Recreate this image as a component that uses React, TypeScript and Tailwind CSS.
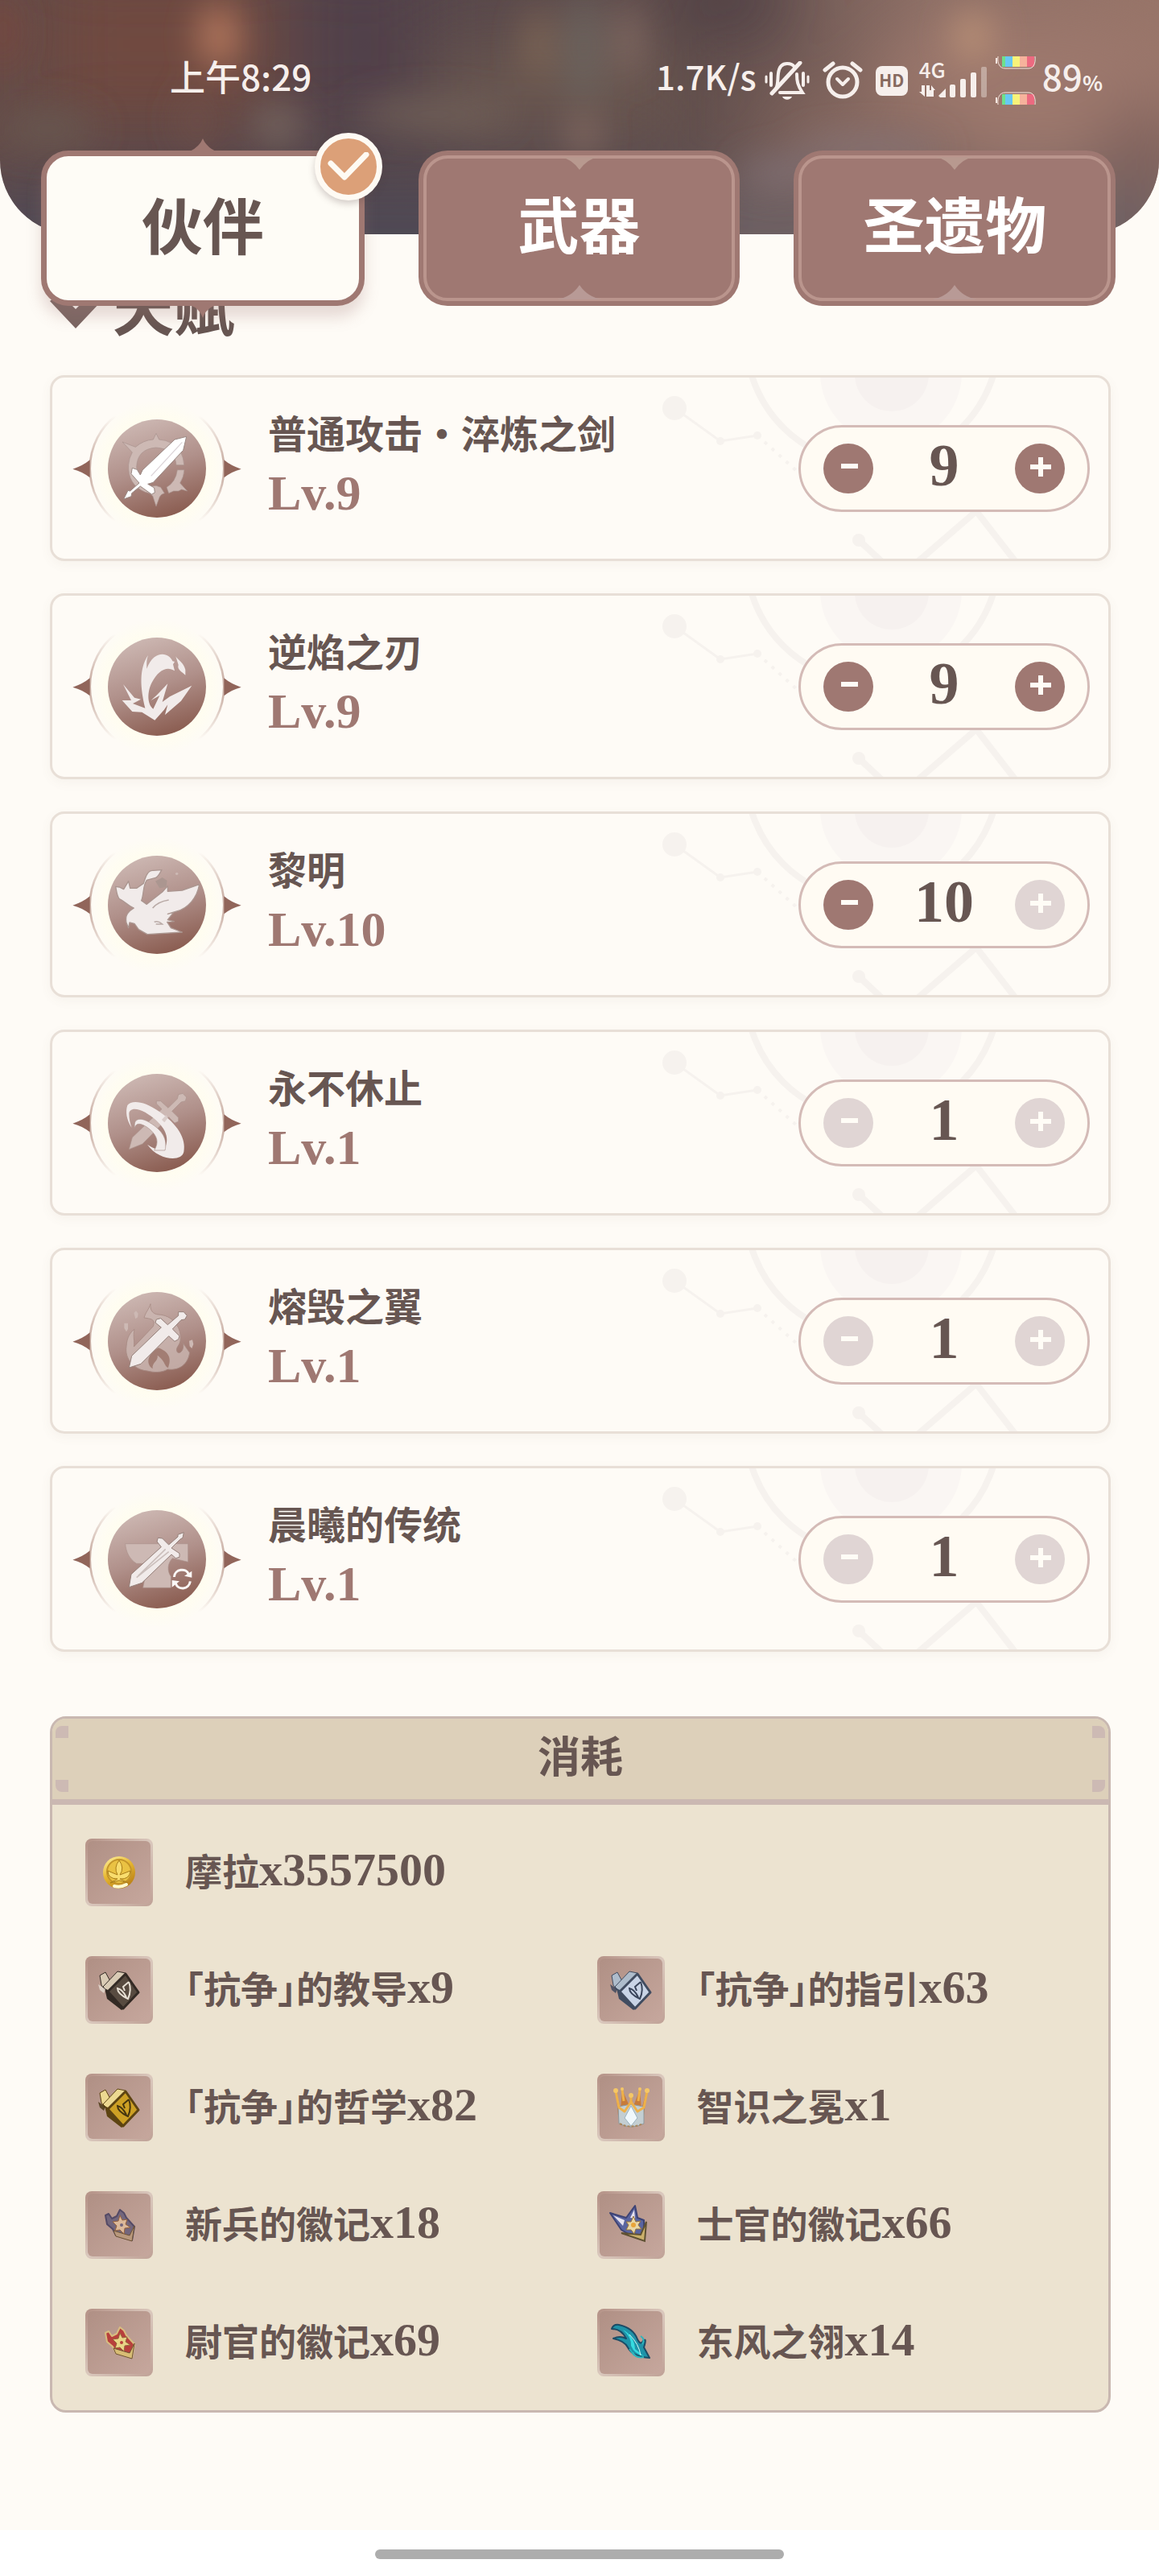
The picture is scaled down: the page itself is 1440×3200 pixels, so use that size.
import { useState, type ReactNode } from "react";

const CJK = "font-['Noto_Sans_CJK_SC','Noto_Sans',sans-serif]";
const NUM = "font-['Liberation_Serif','Noto_Sans_CJK_SC',serif]";

/* ---------- status bar ---------- */

function Backdrop() {
  return (
    <svg
      className="absolute inset-0 h-full w-full"
      viewBox="0 0 1440 291"
      preserveAspectRatio="none"
      aria-hidden="true"
    >
      <defs>
        <filter id="haze" x="-60%" y="-80%" width="220%" height="260%">
          <feGaussianBlur stdDeviation="22" />
        </filter>
        <filter id="hazeWide" x="-30%" y="-60%" width="160%" height="220%">
          <feGaussianBlur stdDeviation="42" />
        </filter>
        <linearGradient id="base" x1="0" x2="1" y1="0" y2="0">
          <stop offset="0" stopColor="#644b47" />
          <stop offset="0.3" stopColor="#54454a" />
          <stop offset="0.6" stopColor="#614e4c" />
          <stop offset="0.8" stopColor="#8c6e65" />
          <stop offset="1" stopColor="#977468" />
        </linearGradient>
      </defs>
      <rect width="1440" height="291" fill="url(#base)" />
      <g filter="url(#hazeWide)">
        <rect x="60" y="-40" width="280" height="190" fill="#70493f" />
        <rect x="380" y="-40" width="140" height="190" fill="#51414a" />
        <rect x="540" y="60" width="300" height="100" fill="#69564f" />
        <rect x="-40" y="225" width="900" height="140" fill="#4f4a54" />
        <rect x="860" y="225" width="620" height="140" fill="#6d6063" />
        <ellipse cx="900" cy="0" rx="80" ry="50" fill="#4f3f45" />
        <ellipse cx="1280" cy="110" rx="190" ry="90" fill="#9d786d" />
        <ellipse cx="1080" cy="170" rx="120" ry="40" fill="#86685f" />
        <ellipse cx="1420" cy="190" rx="60" ry="60" fill="#7d605c" />
      </g>
      <g filter="url(#haze)">
        <ellipse cx="272" cy="45" rx="24" ry="40" fill="#b87a5f" />
        <ellipse cx="4" cy="40" rx="16" ry="50" fill="#7a463c" />
        <ellipse cx="60" cy="160" rx="60" ry="24" fill="#68574f" />
        <ellipse cx="345" cy="155" rx="32" ry="24" fill="#766660" />
        <ellipse cx="245" cy="150" rx="20" ry="36" fill="#6e4f48" />
        <ellipse cx="540" cy="142" rx="100" ry="18" fill="#716159" />
        <ellipse cx="668" cy="55" rx="12" ry="46" fill="#8a7059" />
        <ellipse cx="725" cy="60" rx="20" ry="70" fill="#6d6660" />
        <ellipse cx="782" cy="50" rx="12" ry="46" fill="#8d736b" />
        <ellipse cx="725" cy="168" rx="18" ry="20" fill="#92746b" />
        <ellipse cx="1208" cy="45" rx="24" ry="30" fill="#bb9277" />
        <ellipse cx="1080" cy="185" rx="90" ry="12" fill="#87777c" />
        <ellipse cx="970" cy="215" rx="50" ry="16" fill="#807074" />
      </g>
    </svg>
  );
}

function MutedBell() {
  return (
    <svg className="h-12 w-14" viewBox="0 0 56 48" fill="none" stroke="#f6efec" strokeLinecap="round">
      <path d="M14 34 C17 29 16 22 17 15 C18 7 22 3 28 3 C32 3 35 4 37 7" strokeWidth="4" />
      <path d="M40 16 C40 25 41 30 47 39 L19 39" strokeWidth="4" />
      <path d="M44 2 L9 40" strokeWidth="5" />
      <path d="M22 44 H34 C32 49 24 49 22 44 Z" fill="#f6efec" stroke="none" />
      <path d="M8 15 V30 M48 15 V30" strokeWidth="4" />
      <path d="M2 19 V26 M54 19 V26" strokeWidth="3" />
    </svg>
  );
}

function Alarm() {
  return (
    <svg className="h-12 w-[50px]" viewBox="0 0 50 48" fill="none" stroke="#f6efec" strokeLinecap="round">
      <circle cx="25" cy="26" r="18" strokeWidth="5" />
      <path d="M18 22 L25 29 L32 22" strokeWidth="4" strokeLinejoin="round" />
      <path d="M3 11 L13 3 M47 11 L37 3" strokeWidth="5" />
    </svg>
  );
}

function Signal() {
  return (
    <div className={`relative flex h-[42px] w-[86px] items-end ${CJK}`}>
      <span className="absolute top-0 left-0 text-[26px] leading-[14px] font-medium">4G</span>
      <svg className="h-10 w-full" viewBox="0 0 86 40" fill="#f6efec">
        <path d="M3 25 H7 V39 L0 33 H3 Z M9 25 H13 L13 31 L15 31 V39 H9 Z M15 25 L20 31 H18 V39 H15 Z" />
        <path d="M24 38 L33 29 V40 H26 Z" />
        <rect x="38" y="24" width="7" height="16" rx="2" />
        <rect x="51" y="17" width="7" height="23" rx="2" />
        <rect x="64" y="9" width="7" height="31" rx="2" />
        <rect x="77" y="2" width="7" height="38" rx="2" opacity="0.4" />
      </svg>
    </div>
  );
}

function BatteryStripe({ flip }: { flip?: boolean }) {
  const colours = ["#6fe08a", "#68c8f4", "#f8f37a", "#f6b29c", "#ec6a80"];
  const xs = [9, 13, 22, 31, 40];
  const ws = [4, 9, 9, 9, 9];
  return (
    <svg className="h-4 w-[53px]" viewBox="0 0 53 16" aria-hidden="true">
      <g transform={flip ? "translate(0 16) scale(1 -1)" : undefined}>
        {colours.map((c, i) => (
          <rect key={c} x={xs[i]} y="0" width={ws[i]} height="13" fill={c} />
        ))}
        <path d="M4 0 C3 9 6 15 13 15 H42 C48 15 51 9 50 0" fill="none" stroke="#f6e6df" strokeWidth="1" />
        <path d="M2 2 V9" stroke="#f6e6df" strokeWidth="2" />
      </g>
    </svg>
  );
}

function StatusBar() {
  return (
    <div
      className={`relative flex items-start justify-between pt-[62px] pr-[70px] pl-[211px] text-[44px] leading-[64px] font-medium text-[#f6efec] ${CJK}`}
    >
      <time>上午8:29</time>
      <div className="flex items-start">
        <span className="mr-2.5 text-[42px]">1.7K/s</span>
        <span className="flex h-[76px] items-center">
          <MutedBell />
          <span className="w-[16px]" />
          <Alarm />
          <span className="mr-3.5 ml-4 flex h-[37px] w-10 items-center justify-center rounded-lg bg-[#f6efec] pb-0.5 text-[21px] leading-none font-bold text-[#86695f]">
            HD
          </span>
          <Signal />
          <span className="mr-1.5 ml-2 flex h-[60px] flex-col justify-between">
            <BatteryStripe />
            <BatteryStripe flip />
          </span>
        </span>
        <span className="flex items-baseline">
          89<span className="text-[26px] font-bold">%</span>
        </span>
      </div>
    </div>
  );
}

/* ---------- tabs ---------- */

function ActiveTab({ label }: { label: string }) {
  return (
    <button
      type="button"
      role="tab"
      aria-selected="true"
      className="relative flex h-[193px] flex-1 items-center justify-center rounded-[34px] border-[7px] border-[#9f7872] bg-[#fefcf6] pb-3.5 text-[76px] leading-none font-bold text-[#675652] shadow-[0_14px_18px_rgba(159,120,114,0.25)]"
    >
      <svg className="absolute -top-[22px] left-1/2 -ml-4 h-4 w-8" viewBox="0 0 32 16" fill="#9f7872">
        <path d="M0 16 Q12 10 16 0 Q20 10 32 16 Z" />
      </svg>
      <svg className="absolute -bottom-[22px] left-1/2 -ml-4 h-4 w-8" viewBox="0 0 32 16" fill="#9f7872">
        <path d="M0 0 Q12 4 16 16 Q20 4 32 0 Z" />
      </svg>
      {label}
      <span className="absolute -top-[29px] -right-[29px] flex size-[84px] items-center justify-center rounded-full border-[7px] border-[#fefaf3] bg-[#dca078] shadow-[0_4px_8px_rgba(80,60,60,0.25)]">
        <svg className="h-9 w-[52px]" viewBox="0 0 52 36" fill="none" stroke="#fefaf3" strokeWidth="7" strokeLinecap="round" strokeLinejoin="round">
          <path d="M4 14 L21 31 L48 3" />
        </svg>
      </span>
    </button>
  );
}

function Tab({ label }: { label: string }) {
  return (
    <button
      type="button"
      role="tab"
      aria-selected="false"
      className="flex h-[193px] flex-1 rounded-[36px] bg-[#9f7872] px-1.5 pt-1.5 pb-1.5 text-[76px] leading-none font-bold text-white"
    >
      <span className="relative flex h-full w-full items-center justify-center rounded-[30px] border-4 border-[#ba958d] pb-4">
        <svg className="absolute -top-0.5 left-1/2 -ml-6 h-4 w-12" viewBox="0 0 48 16" fill="#b8998f">
          <path d="M0 0 H48 Q34 2 24 16 Q14 2 0 0 Z" />
        </svg>
        <svg className="absolute -bottom-0.5 left-1/2 -ml-7 h-[18px] w-14" viewBox="0 0 56 18" fill="#b89a96">
          <path d="M0 18 H56 Q38 15 28 0 Q18 15 0 18 Z" />
        </svg>
        {label}
      </span>
    </button>
  );
}

/* ---------- talent glyphs, drawn around the centre of the medallion ---------- */

const PALE = "#f1ebea";
const MID = "#cdb9b4";

const glyphs: Record<string, ReactNode> = {
  blade: (
    <>
      <g fill={MID} stroke="#a8918c" strokeWidth="2">
        <path d="M-3 -131 L8 -108 Q60 -105 88 -62 Q100 -40 101 -13 L72 -13 Q66 -74 -4 -78 Q-74 -72 -76 -5 Q-72 30 -50 52 L-20 66 L-3 64 L14 70 L28 92 Q14 96 10 106 L-3 141 L-16 102 Q-24 92 -44 88 Q-110 60 -106 -14 Q-104 -40 -92 -60 L-129 -99 L-80 -80 Q-50 -106 -14 -108 Z" />
        <path d="M102 5 Q100 32 86 54 L113 84 L92 78 L80 84 L62 84 L44 92 L36 70 Q70 50 76 5 Z" />
      </g>
      <path d="M110 -119 L66 -108 L-54 6 L-62 24 L-74 4 L-92 -2 L-96 20 L-66 54 L-100 84 L-108 82 L-124 114 L-96 104 L-94 92 L-62 66 L-20 96 L-8 90 L-10 72 L-34 58 L-14 52 L98 -68 Z" fill="#fff" stroke="#9a8883" strokeWidth="3" />
      <path d="M94 -98 L-22 28" stroke="#dcd4d8" strokeWidth="4" />
    </>
  ),
  flame: (
    <g fill={PALE} transform="translate(-346 -335)">
      <path d="M313 218 C278 270 284 340 302 415 L256 398 L286 382 L262 376 L220 326 L250 386 L216 386 L254 428 L290 430 L338 460 L372 422 L386 402 L376 440 L436 388 L476 331 L394 372 L366 392 L386 324 L346 366 L324 386 L356 368 L332 418 C308 400 310 350 328 318 C350 276 382 256 412 276 L406 252 L412 242 L404 240 C392 206 334 196 308 268 C308 250 306 238 313 218 Z" />
      <path d="M416 222 C424 236 446 246 452 272 L452 292 C440 280 420 272 426 254 Z" />
    </g>
  ),
  bird: (
    <g transform="translate(-346 -338)">
      <path d="M340 250 L366 236 L384 248 L380 272 L356 276 Z M288 344 L310 330 L322 352 Z" fill="#ab9690" />
      <circle cx="420" cy="222" r="5" fill={MID} />
      <path
        d="M192 270 L206 272 L222 280 L240 250 L246 276 L270 276 L296 258 C304 232 312 208 332 210 L364 208 C356 220 350 238 338 238 L308 246 C292 270 298 300 288 322 L308 336 L366 290 L386 268 L386 288 L440 284 L504 262 C496 312 462 350 420 362 L386 372 L408 366 L386 394 L410 400 L384 402 L398 424 L440 440 L310 448 L278 430 L262 408 L244 404 L240 424 L232 404 C226 376 240 362 260 350 C234 340 226 324 206 316 C196 304 196 288 192 270 Z"
        fill={PALE}
        stroke="#ab9690"
        strokeWidth="4"
        strokeLinejoin="round"
      />
      <path d="M330 350 Q350 326 390 320 M336 402 Q352 396 366 410 L342 410" fill="none" stroke="#b9aaa6" strokeWidth="5" />
    </g>
  ),
  orbit: (
    <g transform="translate(-344 -342)">
      <path
        d="M240 440 L252 396 L362 290 L342 270 L342 260 L358 260 L386 286 L420 252 L424 236 L440 232 L454 246 L450 260 L434 264 L400 298 L424 322 L424 336 L410 342 L388 320 L290 420 Z"
        fill={MID}
        stroke="#ab928c"
        strokeWidth="2"
      />
      <path
        d="M250 360 C230 330 226 300 234 276 C250 254 300 262 350 298 C420 346 454 400 444 450 C436 488 350 482 308 422 C340 444 366 446 376 430 C394 384 362 340 300 302 C262 282 240 290 240 308 C240 326 244 342 250 360 Z"
        fill={PALE}
      />
      <path d="M262 362 C254 326 280 318 316 340 C366 370 384 404 374 444 L334 444 C352 414 346 392 318 366 C288 342 264 338 262 362 Z" fill={PALE} stroke="#ab928c" strokeWidth="2" />
      <path d="M362 330 L378 312 L384 324 L372 340 Z" fill="#dacdca" />
    </g>
  ),
  pyre: (
    <g transform="translate(-344 -345)">
      <path
        d="M320 206 C318 230 328 244 350 246 C400 248 434 290 432 336 C432 362 410 368 420 386 C432 396 448 372 440 350 L466 388 C460 430 428 456 384 450 C360 464 330 462 308 456 C258 452 222 410 230 364 C232 330 244 314 260 300 C254 330 262 344 258 366 L330 290 C340 262 320 262 296 258 C302 236 312 230 320 206 Z"
        fill={MID}
        opacity="0.8"
        stroke="#a78b84"
        strokeWidth="3"
      />
      <path d="M350 370 C400 390 394 420 386 444 C372 440 376 420 346 398 C350 420 324 424 328 448 C300 430 310 390 350 370 Z" fill="#a27d73" />
      <path d="M222 278 L236 278 L236 300 L230 310 L222 296 Z M258 240 L266 232 L274 242 L272 256 L264 262 Z M464 344 L476 340 L480 356 L474 372 L466 364 Z" fill={MID} />
      <path
        d="M240 444 L250 400 L360 294 L338 276 L342 264 L358 260 L384 284 L424 250 L424 236 L444 236 L456 250 L448 264 L434 266 L402 300 L428 326 L424 338 L410 346 L388 326 L284 430 Z"
        fill={PALE}
        stroke="#95807a"
        strokeWidth="3"
      />
    </g>
  ),
  anvil: (
    <g transform="translate(-346 -1160)">
      <path
        d="M228 1102 H462 V1170 L404 1156 C384 1176 384 1204 398 1224 V1266 H294 C298 1240 310 1210 300 1176 L270 1176 C244 1160 230 1132 228 1102 Z"
        fill={MID}
        stroke="#ab928c"
        strokeWidth="2"
      />
      <path
        d="M242 1264 L250 1216 L362 1114 L346 1094 L350 1080 L366 1082 L390 1106 L424 1076 L424 1068 L446 1060 L442 1080 L432 1086 L400 1118 L430 1138 L430 1152 L416 1156 L400 1142 L290 1248 Z"
        fill={PALE}
        stroke="#95807a"
        strokeWidth="3"
      />
      <path d="M390 1132 L270 1228 M378 1122 L276 1222" stroke="#cbbfbc" strokeWidth="5" fill="none" />
      <g fill="none" stroke="#fbf8f6" strokeWidth="9">
        <path d="M410 1226 C412 1196 456 1190 464 1216" />
        <path d="M470 1242 C466 1274 424 1276 416 1250" />
      </g>
      <path d="M448 1222 L476 1228 V1204 Z M402 1264 V1238 L430 1242 Z" fill="#fbf8f6" />
    </g>
  ),
};

function Medallion({ glyph }: { glyph: string }) {
  return (
    <svg className="h-[184px] w-[210px] shrink-0" viewBox="-315 -276 630 552" aria-hidden="true">
      <defs>
        <linearGradient id="disc" x1="0.3" y1="0" x2="0.62" y2="1">
          <stop offset="0" stopColor="#cdb8b3" />
          <stop offset="0.5" stopColor="#b0908a" />
          <stop offset="1" stopColor="#8a5c50" />
        </linearGradient>
        <radialGradient id="halo">
          <stop offset="0.75" stopColor="#fffdf0" />
          <stop offset="1" stopColor="#fffdf0" stopOpacity="0" />
        </radialGradient>
        <linearGradient id="arc" x1="0" x2="0" y1="0" y2="1">
          <stop offset="0" stopColor="#cdb4aa" stopOpacity="0" />
          <stop offset="0.4" stopColor="#cdb4aa" />
          <stop offset="0.6" stopColor="#cdb4aa" />
          <stop offset="1" stopColor="#cdb4aa" stopOpacity="0" />
        </linearGradient>
      </defs>
      <circle r="256" fill="url(#halo)" />
      <path d="M-155 -196 A250 250 0 0 0 -155 196" fill="none" stroke="url(#arc)" strokeWidth="8" />
      <path d="M155 -196 A250 250 0 0 1 155 196" fill="none" stroke="url(#arc)" strokeWidth="8" />
      <path d="M-314 2 Q-276 -10 -250 -32 V34 Q-276 12 -314 2 Z" fill="#91655a" />
      <path d="M314 2 Q276 -10 250 -32 V34 Q276 12 314 2 Z" fill="#91655a" />
      <circle r="183" fill="url(#disc)" />
      {glyphs[glyph]}
    </svg>
  );
}

function CardPattern() {
  return (
    <svg
      className="pointer-events-none absolute top-0 right-0 h-[225px] w-[577px]"
      viewBox="800 468 577 225"
      fill="none"
      stroke="#f6f2ee"
      aria-hidden="true"
    >
      <circle cx="1107" cy="462" r="88" fill="#faf6f3" stroke="none" />
      <circle cx="1108" cy="464" r="46" fill="#f6f1ef" stroke="none" />
      <circle cx="1084" cy="419" r="157" strokeWidth="8" />
      <circle cx="838" cy="506" r="15" fill="#f6f2ee" stroke="none" />
      <path d="M838 506 L895 547 L941 540" strokeWidth="3" />
      <circle cx="895" cy="547" r="5" fill="#f6f2ee" stroke="none" />
      <circle cx="941" cy="540" r="5" fill="#f6f2ee" stroke="none" />
      <path d="M941 540 L992 586" strokeWidth="4" strokeDasharray="4 8" />
      <circle cx="1067" cy="670" r="8" fill="#f6f2ee" stroke="none" />
      <path d="M1067 670 L1096 697 M1140 697 L1213 634 L1262 697" strokeWidth="8" />
    </svg>
  );
}

/* ---------- talents ---------- */

type Talent = { name: string; glyph: string; level: number; upgradable: boolean };

const initialTalents: Talent[] = [
  { name: "普通攻击·淬炼之剑", glyph: "blade", level: 9, upgradable: true },
  { name: "逆焰之刃", glyph: "flame", level: 9, upgradable: true },
  { name: "黎明", glyph: "bird", level: 10, upgradable: true },
  { name: "永不休止", glyph: "orbit", level: 1, upgradable: false },
  { name: "熔毁之翼", glyph: "pyre", level: 1, upgradable: false },
  { name: "晨曦的传统", glyph: "anvil", level: 1, upgradable: false },
];

function RoundButton({
  kind,
  label,
  disabled,
  onClick,
}: {
  kind: "minus" | "plus";
  label: string;
  disabled: boolean;
  onClick: () => void;
}) {
  return (
    <button
      type="button"
      aria-label={label}
      disabled={disabled}
      onClick={onClick}
      className="flex size-[62px] items-center justify-center rounded-full bg-[#9f7872] text-[#fffcf6] disabled:bg-[#e0d5d4]"
    >
      <svg className="size-7" viewBox="0 0 28 28" stroke="currentColor" strokeWidth="6">
        <path d={kind === "minus" ? "M5 11 H26" : "M2 12 H28 M15 0 V24"} />
      </svg>
    </button>
  );
}

function TalentCard({ talent, onChange }: { talent: Talent; onChange: (level: number) => void }) {
  const { name, glyph, level, upgradable } = talent;
  return (
    <li className="relative flex min-h-[231px] items-center overflow-hidden rounded-[18px] border-[3px] border-[#e8dfd7] bg-[#fefbf6] pr-[23px] pl-[25px] shadow-[0_4px_14px_rgba(120,100,90,0.06)]">
      <CardPattern />
      <Medallion glyph={glyph} />
      <div className="relative ml-[33px] flex-1 pb-3 font-bold">
        <h3 className="text-[48px] leading-[72px] text-[#675652]">{name}</h3>
        <p className={`text-[62px] leading-[80px] text-[#9f7872] ${NUM}`}>Lv.{level}</p>
      </div>
      <div className="relative flex h-[108px] w-[362px] items-center justify-between rounded-full border-[3px] border-[#d4bbb7] bg-[#fffbf3] px-[28px]">
        <RoundButton kind="minus" label={`${name} -`} disabled={!upgradable || level <= 1} onClick={() => onChange(level - 1)} />
        <output className={`pb-2 text-[74px] leading-none font-bold text-[#675652] ${NUM}`}>{level}</output>
        <RoundButton kind="plus" label={`${name} +`} disabled={!upgradable || level >= 10} onClick={() => onChange(level + 1)} />
      </div>
    </li>
  );
}

/* ---------- materials ---------- */

function Book({ cover, spine, page, mark }: { cover: string; spine: string; page: string; mark: string }) {
  return (
    <>
      <path d="M18 24 L25 20 L31 31 L24 42 L20 36 Z" fill={page} stroke={spine} strokeWidth="1" />
      <path d="M40 19 L50 21 L28 44 L22 38 Z" fill={page} stroke={spine} strokeWidth="1" />
      <path d="M24 40 L27 53 L45 67 L49 64 L32 44 Z" fill={spine} />
      <path d="M16 35 L25 41 L23 46 L18 42 Z" fill={mark} opacity="0.8" />
      <path d="M50 22 L66 45 L47 65 L28 44 Z" fill={cover} stroke={spine} strokeWidth="3" strokeLinejoin="round" />
      <g fill="none" stroke={mark} strokeWidth="2">
        <path d="M54 32 Q58 42 53 53 Q40 47 40 40 Q46 41 51 51" />
        <path d="M54 32 L47 38 L49 43" />
      </g>
    </>
  );
}

function Emblem({ rim, body, star, base }: { rim: string; body: string; star: string; base: string }) {
  return (
    <>
      <path
        d="M25 30 L29 28 L33 34 L39 31 L43 23 L48 27 L51 33 L61 44 L58 61 L38 55 L34 47 L27 41 Z"
        fill={body}
        stroke={rim}
        strokeWidth="2"
        strokeLinejoin="round"
      />
      <path d="M35 49 L55 55 L61 43 L58 62 L38 56 Z" fill={base} stroke="#6e5335" strokeWidth="1" />
      <path
        d="M43 30 L46 36 L52 35 L50 41 L56 45 L49 46 L48 53 L43 48 L37 49 L39 43 L34 38 L41 37 Z"
        fill={star}
        stroke="#97633c"
        strokeWidth="1"
      />
      <circle cx="45" cy="42" r="2" fill={body} />
    </>
  );
}

const art: Record<string, ReactNode> = {
  mora: (
    <>
      <defs>
        <linearGradient id="gold" x1="0" y1="0" x2="0.6" y2="1">
          <stop offset="0" stopColor="#fff6a8" />
          <stop offset="0.5" stopColor="#e8b933" />
          <stop offset="1" stopColor="#bd8418" />
        </linearGradient>
      </defs>
      <circle cx="42" cy="42" r="20" fill="url(#gold)" />
      <circle cx="42" cy="41" r="15" fill="#eac243" stroke="#c4952a" strokeWidth="2" />
      <path
        d="M42 27 Q49 36 43 45 L56 40 Q55 51 43 50 L53 55 L42 52 L31 55 L40 50 Q28 50 28 40 L40 45 Q35 36 42 27 Z"
        fill="#f8dd6e"
        stroke="#a87c18"
        strokeWidth="1"
      />
      <path d="M36 59 Q44 61 51 57" stroke="#fffbd0" strokeWidth="4" strokeLinecap="round" fill="none" />
    </>
  ),
  bookGreen: <Book cover="#584b40" spine="#332a24" page="#d9cbb5" mark="#e8e0d4" />,
  bookBlue: <Book cover="#c9d4e6" spine="#414c60" page="#aebccb" mark="#39445a" />,
  bookGold: <Book cover="#cda024" spine="#5d4412" page="#ecd991" mark="#45350f" />,
  crown: (
    <>
      <path d="M23 20 L29 44 L31 20 L40 40 L42 27 L45 40 L53 20 L55 44 L62 20 L58 52 H26 Z" fill="#c77b3a" />
      <path d="M26 41 L42 38 L58 41 L58 62 Q42 70 27 62 Z" fill="#c3ced2" stroke="#8d989c" strokeWidth="1" />
      <path d="M42 40 L50 55 L42 65 L34 55 Z" fill="#f0f8fc" stroke="#9db3bf" strokeWidth="1" />
      <path d="M28 62 Q42 69 57 62" stroke="#a9855a" strokeWidth="2" fill="none" strokeDasharray="3 2" />
      <path d="M23 22 L27 42 L34 47 L42 35 L50 47 L58 42 L62 22" fill="none" stroke="#eeb14a" strokeWidth="3" strokeLinejoin="round" />
      <path d="M31 20 L33 34 M53 20 L51 34 M42 27 V36" stroke="#eeb14a" strokeWidth="3" />
      <g fill="#f5c766">
        <circle cx="23" cy="21" r="3" />
        <circle cx="31" cy="19" r="2" />
        <circle cx="42" cy="27" r="3" />
        <circle cx="53" cy="19" r="2" />
        <circle cx="62" cy="21" r="3" />
      </g>
    </>
  ),
  recruit: <Emblem rim="#544a66" body="#73667c" star="#dcb99a" base="#b8987c" />,
  sergeant: (
    <>
      <path d="M16 27 L36 33 L47 18 L50 33 L58 36 L58 58 L40 54 L30 48 Z" fill="#5a64a0" stroke="#3d4374" strokeWidth="2" strokeLinejoin="round" />
      <path d="M20 30 L34 36 L32 43 Z M46 23 L47 34 L41 33 Z" fill="#e6e2ee" />
      <path d="M30 52 L54 54 L61 38 L59 62 Z" fill="#cbb06a" stroke="#5f5133" strokeWidth="2" />
      <path
        d="M45 31 L48 38 L54 37 L51 42 L55 47 L48 47 L46 53 L42 48 L36 48 L39 42 L36 38 L42 38 Z"
        fill="#ead7a6"
        stroke="#92703c"
        strokeWidth="1"
      />
      <circle cx="45" cy="42" r="3" fill="#e9a43a" />
    </>
  ),
  officer: <Emblem rim="#d8bd80" body="#b8403c" star="#e8d487" base="#d8bd74" />,
  feather: (
    <>
      <path
        d="M18 25 Q20 19 27 20 Q45 24 50 38 Q54 46 57 40 Q62 35 58 48 L65 61 Q44 60 38 48 Q34 40 20 37 Q28 33 36 37 Q30 25 18 25 Z"
        fill="#1f93a8"
        stroke="#1c4c66"
        strokeWidth="2"
        strokeLinejoin="round"
      />
      <path d="M32 26 Q46 34 47 50 L58 59 Q46 56 42 46 Q43 36 32 26 Z" fill="#36dbe0" />
      <path d="M54 34 Q60 38 56 44 M44 54 Q48 62 58 60 M40 50 L46 58" stroke="#2cb5bd" strokeWidth="2" fill="none" />
      <path d="M40 32 Q52 44 54 58" stroke="#d3fbf6" strokeWidth="1" fill="none" />
    </>
  ),
};

type Material = { name: string; count: number; icon: string; wide?: boolean };

const materials: Material[] = [
  { name: "摩拉", count: 3557500, icon: "mora", wide: true },
  { name: "「抗争」的教导", count: 9, icon: "bookGreen" },
  { name: "「抗争」的指引", count: 63, icon: "bookBlue" },
  { name: "「抗争」的哲学", count: 82, icon: "bookGold" },
  { name: "智识之冕", count: 1, icon: "crown" },
  { name: "新兵的徽记", count: 18, icon: "recruit" },
  { name: "士官的徽记", count: 66, icon: "sergeant" },
  { name: "尉官的徽记", count: 69, icon: "officer" },
  { name: "东风之翎", count: 14, icon: "feather" },
];

function MaterialItem({ item }: { item: Material }) {
  return (
    <li className={item.wide ? "col-span-2 flex items-center" : "flex items-center"}>
      <span className="size-[84px] shrink-0 overflow-hidden rounded-lg bg-linear-to-br from-[#b39085] via-[#dac8bd] to-[#bfa196] p-[3px]">
        <svg
          className="size-full rounded-md bg-linear-to-br from-[#b09085] to-[#c6a79d]"
          viewBox="3 3 78 78"
          aria-hidden="true"
        >
          {art[item.icon]}
        </svg>
      </span>
      <span className="ml-10 flex items-baseline pb-2 text-[46px] leading-[72px] font-bold whitespace-nowrap text-[#675652] [font-feature-settings:'halt']">
        {item.name}
        <span className={`text-[58px] ${NUM}`}>x{item.count}</span>
      </span>
    </li>
  );
}

function CornerMarks() {
  return (
    <>
      <span className="absolute top-[9px] left-1 h-[15px] w-4 rounded-tl-lg bg-[#cdbab4]" />
      <span className="absolute bottom-[9px] left-1 h-[15px] w-4 rounded-bl-lg bg-[#cdbab4]" />
      <span className="absolute top-[9px] right-1 h-[15px] w-4 rounded-tr-lg bg-[#cdbab4]" />
      <span className="absolute right-1 bottom-[9px] h-[15px] w-4 rounded-br-lg bg-[#cdbab4]" />
    </>
  );
}

/* ---------- page ---------- */

export default function App() {
  const [talents, setTalents] = useState(initialTalents);

  const setLevel = (index: number, level: number) =>
    setTalents((list) => list.map((t, i) => (i === index ? { ...t, level } : t)));

  return (
    <div className={`flex min-h-screen flex-col bg-[#fefbf6] ${CJK}`}>
      <header className="relative h-[291px] overflow-hidden rounded-b-[92px]">
        <Backdrop />
        <StatusBar />
      </header>

      <nav role="tablist" className="relative z-10 -mt-[104px] flex gap-[67px] pr-[54px] pl-[51px]">
        <ActiveTab label="伙伴" />
        <Tab label="武器" />
        <Tab label="圣遗物" />
      </nav>

      <main className="flex-1 pr-[60px] pb-[146px] pl-[62px]">
        <h2 className="-mt-10 flex items-center text-[76px] leading-[76px] font-bold text-[#675652]">
          <svg className="mr-3.5 h-[60px] w-16" viewBox="0 0 64 60" fill="#7a6562" aria-hidden="true">
            <path d="M32 0 L44 14 L32 26 L20 14 Z M0 26 L12 16 L32 36 L52 16 L64 26 L32 60 Z" />
          </svg>
          天赋
        </h2>

        <ul className="mt-[50px] flex flex-col gap-10">
          {talents.map((talent, i) => (
            <TalentCard key={talent.name} talent={talent} onChange={(level) => setLevel(i, level)} />
          ))}
        </ul>

        <section className="mt-20 overflow-hidden rounded-[20px] border-[3px] border-[#c9b8b1] bg-[#ece3d0]">
          <div className="relative border-b-[7px] border-[#cbb8b2] bg-[#ddd0ba] pt-[10px] pb-[18px]">
            <CornerMarks />
            <h2 className="pb-1 text-center text-[53px] leading-[68px] font-bold text-[#675652]">消耗</h2>
          </div>
          <ul className="grid grid-cols-2 gap-y-[62px] py-[42px] pl-[41px]">
            {materials.map((item) => (
              <MaterialItem key={item.name} item={item} />
            ))}
          </ul>
        </section>
      </main>

      <footer className="flex h-[59px] justify-center bg-white pt-6">
        <span className="h-3 w-[508px] rounded-full bg-[#adadad]" />
      </footer>
    </div>
  );
}
